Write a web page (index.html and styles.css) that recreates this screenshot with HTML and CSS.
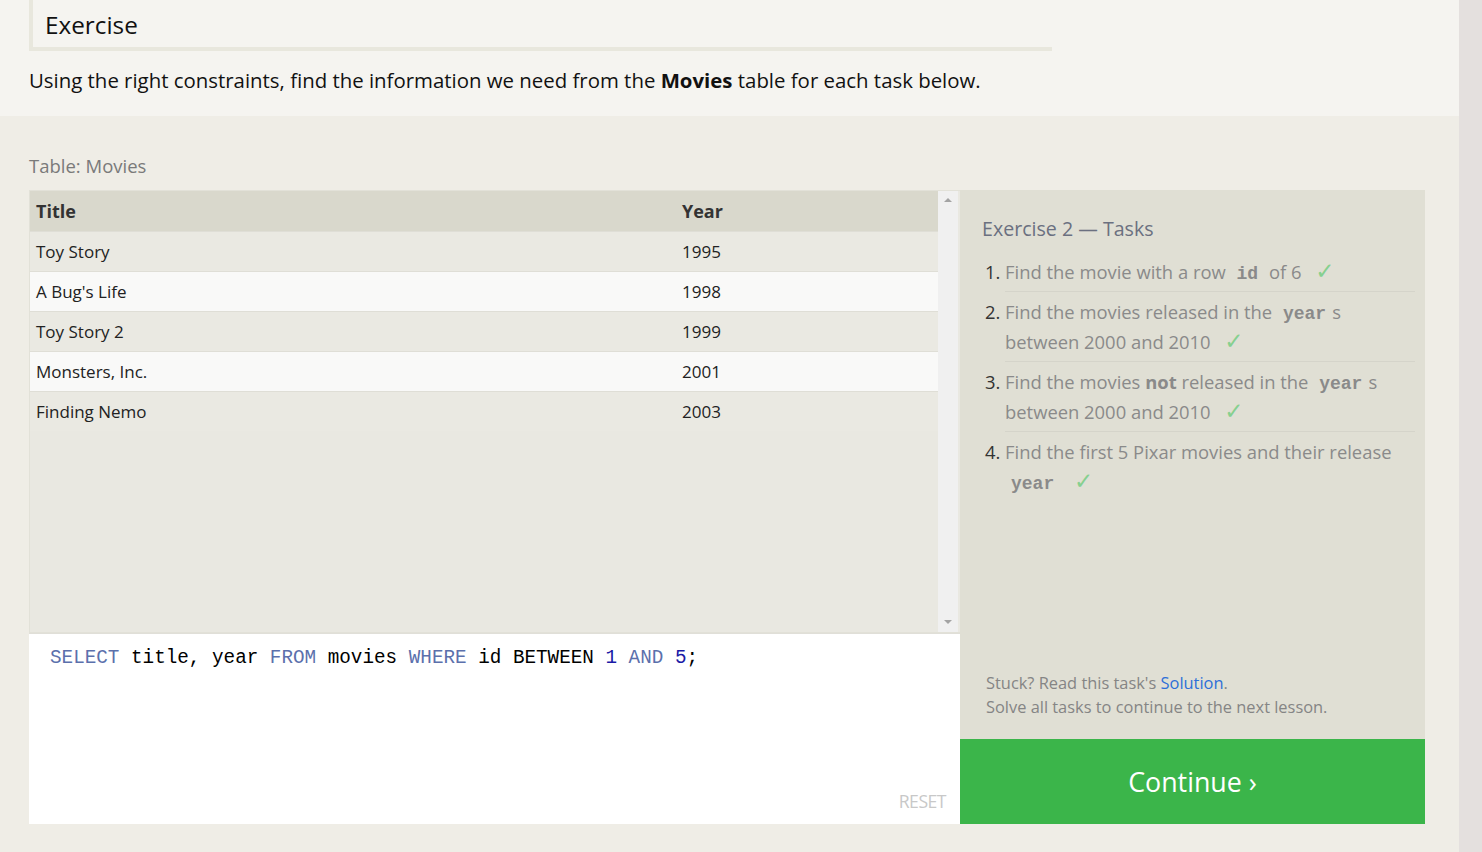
FILE: index.html
```html
<!DOCTYPE html>
<html>
<head>
<meta charset="utf-8">
<link rel="stylesheet" href="styles.css">
</head>
<body>
<div class="page">
  <section class="intro">
    <h2 class="ex-title">Exercise</h2>
    <p class="ex-desc">Using the right constraints, find the information we need from the <strong>Movies</strong> table for each task below.</p>
  </section>
  <section class="main">
    <div class="table-label">Table: Movies</div>
    <div class="workspace">
      <div class="left">
        <div class="results">
          <div class="results-scroll">
            <table class="movies">
              <thead>
                <tr><th class="c-title">Title</th><th class="c-year">Year</th></tr>
              </thead>
              <tbody>
                <tr class="odd"><td>Toy Story</td><td>1995</td></tr>
                <tr class="even"><td>A Bug's Life</td><td>1998</td></tr>
                <tr class="odd"><td>Toy Story 2</td><td>1999</td></tr>
                <tr class="even"><td>Monsters, Inc.</td><td>2001</td></tr>
                <tr class="odd"><td>Finding Nemo</td><td>2003</td></tr>
              </tbody>
            </table>
          </div>
          <div class="scrollbar">
            <span class="arrow up"></span>
            <span class="arrow down"></span>
          </div>
        </div>
        <div class="editor">
          <div class="code"><span class="kw">SELECT</span> title, year <span class="kw">FROM</span> movies <span class="kw">WHERE</span> id BETWEEN <span class="num">1</span> <span class="kw">AND</span> <span class="num">5</span>;</div>
          <div class="reset">RESET</div>
        </div>
      </div>
      <div class="right">
        <div class="tasks">
          <h3 class="tasks-title">Exercise 2 — Tasks</h3>
          <ol class="task-list">
            <li><span class="t">Find the movie with a row <code>id</code> of 6 <span class="check">✓</span></span></li>
            <li><span class="t">Find the movies released in the <code>year</code>s between 2000 and 2010 <span class="check">✓</span></span></li>
            <li><span class="t">Find the movies <b>not</b> released in the <code>year</code>s between 2000 and 2010 <span class="check">✓</span></span></li>
            <li class="last"><span class="t">Find the first 5 Pixar movies and their release <code>year</code> <span class="check">✓</span></span></li>
          </ol>
          <div class="help">
            <div>Stuck? Read this task's <a class="link">Solution</a>.</div>
            <div>Solve all tasks to continue to the next lesson.</div>
          </div>
        </div>
        <div class="continue">Continue ›</div>
      </div>
    </div>
  </section>
</div>
<div class="strip"></div>
</body>
</html>
```

FILE: styles.css
```css
html, body {
  margin: 0;
  padding: 0;
  height: 100%;
  overflow: hidden;
}
body {
  display: flex;
  font-family: "Open Sans", "Noto Sans", sans-serif;
  background: #efede6;
}
.page {
  flex: 1;
  min-width: 0;
}
.strip {
  width: 23px;
  background: #e4e0de;
}
.intro {
  background: #f5f4f0;
  height: 116px;
  padding: 0 29px;
  box-sizing: border-box;
  overflow: hidden;
}
.ex-title {
  margin: 0;
  width: 1023px;
  box-sizing: border-box;
  height: 51px;
  border-left: 4px solid #e8e7dd;
  border-bottom: 4px solid #e8e7dd;
  padding: 8px 0 0 12px;
  font-weight: 400;
  font-size: 24.3px;
  line-height: 34px;
  color: #111;
}
.ex-desc {
  margin: 14px 0 0 0;
  font-size: 20.4px;
  line-height: 30px;
  color: #111;
}
.ex-desc strong { font-weight: 700; }
.main {
  padding: 38px 0 28px 29px;
}
.table-label {
  font-size: 18.5px;
  color: #7a7a7a;
  line-height: 24px;
  margin-bottom: 12px;
}
.workspace {
  display: grid;
  grid-template-columns: 931px 465px;
  width: 1396px;
}
.left {
  display: flex;
  flex-direction: column;
}
.results {
  height: 443px;
  display: flex;
  background: #e9e8e1;
  border: 1px solid #e2e1d8;
  border-right: none;
  box-sizing: border-box;
}
.results-scroll {
  flex: 1;
}
.scrollbar {
  width: 20px;
  margin-right: 2px;
  background: #f0f0f0;
  position: relative;
}
.arrow {
  position: absolute;
  left: 6px;
  width: 0;
  height: 0;
  border-left: 4px solid transparent;
  border-right: 4px solid transparent;
}
.arrow.up { top: 7px; border-bottom: 4px solid #a3a3a3; }
.arrow.down { bottom: 8px; border-top: 4px solid #a3a3a3; }
.movies {
  width: 100%;
  border-collapse: collapse;
  font-size: 17px;
  color: #222;
}
.movies th {
  background: #d9d8cc;
  text-align: left;
  font-weight: 700;
  font-size: 18px;
  height: 40px;
  padding: 0 6px;
  color: #333;
}
.movies th.c-year { width: 250px; }
.movies td {
  height: 39px;
  padding: 0 6px;
  border-top: 1px solid #dfded6;
}
.movies tr.odd td { background: #eae9e2; }
.movies tr.even td { background: #f9f9f8; }
.editor {
  height: 191px;
  background: #fff;
  border-top: 1px solid #e0dfd8;
  box-sizing: border-box;
  position: relative;
  padding: 11px 20px 9px 21px;
}
.code {
  font-family: "Liberation Mono", "DejaVu Sans Mono", monospace;
  font-size: 19.3px;
  line-height: 26px;
  color: #000;
  white-space: pre;
}
.code .kw { color: #5b70ac; }
.code .num { color: #1a1aa6; }
.reset {
  position: absolute;
  right: 14px;
  bottom: 11px;
  font-size: 17.6px;
  color: #c8c8c8;
  letter-spacing: -0.5px;
}
.right {
  display: flex;
  flex-direction: column;
}
.tasks {
  background: #e0dfd4;
  height: 549px;
  box-sizing: border-box;
  padding: 24px 10px 0 22px;
  display: flex;
  flex-direction: column;
}
.tasks-title {
  margin: 0;
  font-weight: 400;
  font-size: 19.6px;
  line-height: 30px;
  color: #6b7080;
}
.task-list {
  margin: 13px 0 0 0;
  padding: 0 0 0 23px;
  font-size: 18.4px;
  line-height: 30px;
  color: #333;
}
.task-list li {
  padding: 0 0 4px 0;
  margin-bottom: 5px;
  border-bottom: 1px solid #d5d4ca;
}
.task-list li.last { border-bottom: none; }
.task-list li::marker { color: #333; }
.task-list .t { color: #8a8a8a; }
.task-list b { font-weight: 700; }
.task-list code {
  font-family: "Liberation Mono", "DejaVu Sans Mono", monospace;
  font-weight: 700;
  font-size: 18px;
  line-height: 1;
  color: #8a8a8a;
  padding: 0 6px;
}
.check {
  font-family: "DejaVu Sans", sans-serif;
  font-size: 23px;
  line-height: 1;
  color: #86d08f;
  margin-left: 9px;
}
.help {
  margin-top: auto;
  padding: 0 0 20px 4px;
  font-size: 16.4px;
  line-height: 24px;
  color: #858585;
}
.link { color: #2e6fd8; }
.continue {
  height: 85px;
  background: #3bb54a;
  color: #fff;
  font-size: 26.8px;
  display: flex;
  align-items: center;
  justify-content: center;
}
```
